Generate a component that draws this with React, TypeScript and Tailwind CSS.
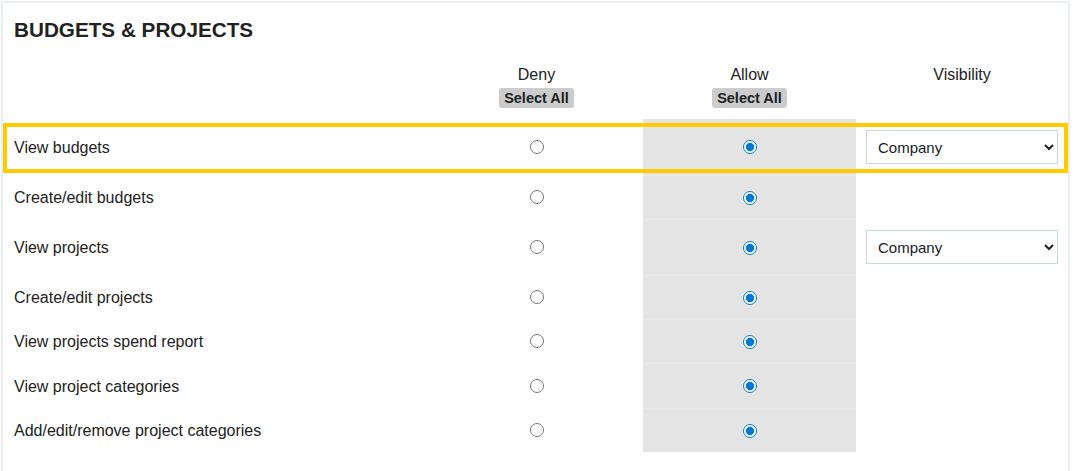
import { useState } from "react";

type Perm = { label: string; visibility?: boolean; h: string };

const perms: Perm[] = [
  { label: "View budgets", visibility: true, h: "h-[56px]" },
  { label: "Create/edit budgets", h: "h-[44px]" },
  { label: "View projects", visibility: true, h: "h-[56px]" },
  { label: "Create/edit projects", h: "h-[44px]" },
  { label: "View projects spend report", h: "h-[44px]" },
  { label: "View project categories", h: "h-[45px]" },
  { label: "Add/edit/remove project categories", h: "h-[44px]" },
];

export default function App() {
  const [vals, setVals] = useState<Record<number, "deny" | "allow">>(
    Object.fromEntries(perms.map((_, i) => [i, "allow"]))
  );

  function selectAll(v: "deny" | "allow") {
    setVals(Object.fromEntries(perms.map((_, i) => [i, v])));
  }

  return (
    <div className="w-[1076px] h-[471px] bg-white text-[#222] font-['Liberation_Sans',Arial,sans-serif] overflow-hidden">
      <div className="ml-[1px] mt-[1px] w-[1069px] h-[480px] border-2 border-b-0 border-[#e9eef1] pt-[15px]">
        <h2 className="pl-[11px] h-6 leading-6 text-[20.7px] font-bold">BUDGETS &amp; PROJECTS</h2>

        {/* header */}
        <div className="grid grid-cols-[427px_213px_213px_212px] h-[77px] pt-6 text-base leading-[18px]">
          <div />
          <div className="flex flex-col items-center gap-1">
            <span>Deny</span>
            <button
              className="h-[20px] px-[5px] rounded-[3px] bg-[#cccccc] text-[14.5px] font-bold leading-[20px]"
              onClick={() => selectAll("deny")}
            >
              Select All
            </button>
          </div>
          <div className="flex flex-col items-center gap-1">
            <span>Allow</span>
            <button
              className="h-[20px] px-[5px] rounded-[3px] bg-[#cccccc] text-[14.5px] font-bold leading-[20px]"
              onClick={() => selectAll("allow")}
            >
              Select All
            </button>
          </div>
          <div className="flex flex-col items-center">
            <span>Visibility</span>
          </div>
        </div>

        {/* rows */}
        {perms.map((p, i) => (
          <div key={i} className={`relative grid grid-cols-[427px_213px_213px_212px] ${p.h} text-base`}>
            <div className="flex items-center pl-[11px] pt-[2px]">{p.label}</div>
            <div className="flex items-center justify-center">
              <input
                type="radio"
                name={`perm-${i}`}
                checked={vals[i] === "deny"}
                onChange={() => setVals((v) => ({ ...v, [i]: "deny" }))}
                className="m-0 w-[14px] h-[14px] accent-[#0078d7]"
              />
            </div>
            <div className={`flex items-center justify-center bg-[#e4e4e4] ${i > 0 ? "border-t border-[#ececec]" : ""}`}>
              <input
                type="radio"
                name={`perm-${i}`}
                checked={vals[i] === "allow"}
                onChange={() => setVals((v) => ({ ...v, [i]: "allow" }))}
                className="m-0 w-[14px] h-[14px] accent-[#0078d7]"
              />
            </div>
            <div className="flex items-center px-[10px]">
              {p.visibility && (
                <select className="w-[192px] h-[34px] pl-[7px] pr-1 border border-[#c5d9e0] bg-white text-[15px] font-['Liberation_Sans',Arial,sans-serif]">
                  <option>Company</option>
                  <option>Department</option>
                  <option>Own</option>
                </select>
              )}
            </div>
            {i === 0 && (
              <div className="absolute left-0 right-0 top-[4px] h-[50px] border-4 border-[#fccc00] pointer-events-none" />
            )}
          </div>
        ))}
      </div>
    </div>
  );
}
